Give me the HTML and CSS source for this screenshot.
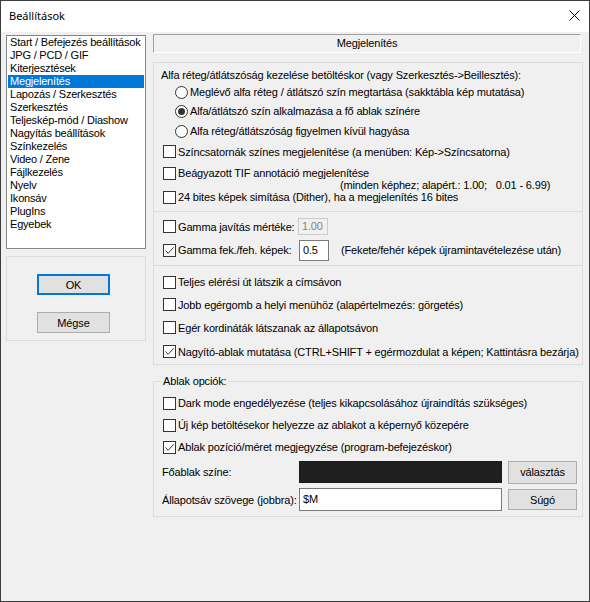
FILE: index.html
```html
<!DOCTYPE html>
<html lang="hu">
<head>
<meta charset="utf-8">
<title>Beállítások</title>
<link rel="stylesheet" href="styles.css">
</head>
<body>
<div class="window">
  <div class="titlebar">
    <span class="title">Beállítások</span>
    <svg class="close" viewBox="0 0 11 11" width="11" height="11"><path d="M0.5 0.5 L10.5 10.5 M10.5 0.5 L0.5 10.5" stroke="#000" stroke-width="1" fill="none"/></svg>
  </div>
  <div class="client">
    <div class="left">
      <ul class="list">
        <li>Start / Befejezés beállítások</li>
        <li>JPG / PCD / GIF</li>
        <li>Kiterjesztések</li>
        <li class="sel">Megjelenítés</li>
        <li>Lapozás / Szerkesztés</li>
        <li>Szerkesztés</li>
        <li>Teljeskép-mód / Diashow</li>
        <li>Nagyítás beállítások</li>
        <li>Színkezelés</li>
        <li>Video / Zene</li>
        <li>Fájlkezelés</li>
        <li>Nyelv</li>
        <li>Ikonsáv</li>
        <li>PlugIns</li>
        <li>Egyebek</li>
      </ul>
      <div class="btnbox">
        <button class="btn ok">OK</button>
        <button class="btn">Mégse</button>
      </div>
    </div>
    <div class="right">
      <div class="header">Megjelenítés</div>
      <div class="group g1">
        <div class="row caption">Alfa réteg/átlátszóság kezelése betöltéskor (vagy Szerkesztés-&gt;Beillesztés):</div>
        <div class="row radio-row r1"><span class="radio"></span>Meglévő alfa réteg / átlátszó szín megtartása (sakktábla kép mutatása)</div>
        <div class="row radio-row r2"><span class="radio on"></span>Alfa/átlátszó szín alkalmazása a fő ablak színére</div>
        <div class="row radio-row r3"><span class="radio"></span>Alfa réteg/átlátszóság figyelmen kívül hagyása</div>
        <div class="row check-row c1"><span class="cb"></span>Színcsatornák színes megjelenítése (a menüben: Kép-&gt;Színcsatorna)</div>
        <div class="row check-row c2"><span class="cb"></span>Beágyazott TIF annotáció megjelenítése</div>
        <div class="row check-row c3"><span class="cb"></span>24 bites képek simítása (Dither), ha a megjelenítés 16 bites<span class="note">(minden képhez; alapért.: 1.00;&nbsp;&nbsp;&nbsp;0.01 - 6.99)</span></div>
        <div class="sep s1"></div>
        <div class="row check-row gam1"><span class="cb"></span><span class="glabel">Gamma javítás mértéke:</span><span class="num dis">1.00</span></div>
        <div class="row check-row gam2"><span class="cb on"><svg viewBox="0 0 11 11" width="11" height="11"><path d="M1.5 5.5 L4.2 8.3 L9.6 2.4" stroke="#333" stroke-width="1" fill="none"/></svg></span><span class="glabel g2l">Gamma fek./feh. képek:</span><span class="num">0.5</span><span class="gnote">(Fekete/fehér képek újramintavételezése után)</span></div>
        <div class="sep s2"></div>
        <div class="row check-row t1"><span class="cb"></span>Teljes elérési út látszik a címsávon</div>
        <div class="row check-row t2"><span class="cb"></span>Jobb egérgomb a helyi menühöz (alapértelmezés: görgetés)</div>
        <div class="row check-row t3"><span class="cb"></span>Egér kordináták látszanak az állapotsávon</div>
        <div class="row check-row t4"><span class="cb on"><svg viewBox="0 0 11 11" width="11" height="11"><path d="M1.5 5.5 L4.2 8.3 L9.6 2.4" stroke="#333" stroke-width="1" fill="none"/></svg></span>Nagyító-ablak mutatása (CTRL+SHIFT + egérmozdulat a képen; Kattintásra bezárja)</div>
      </div>
      <div class="group g2">
        <span class="legend">Ablak opciók:</span>
        <div class="row check-row w1"><span class="cb"></span>Dark mode engedélyezése (teljes kikapcsolásához újraindítás szükséges)</div>
        <div class="row check-row w2"><span class="cb"></span>Új kép betöltésekor helyezze az ablakot a képernyő közepére</div>
        <div class="row check-row w3"><span class="cb on"><svg viewBox="0 0 11 11" width="11" height="11"><path d="M1.5 5.5 L4.2 8.3 L9.6 2.4" stroke="#333" stroke-width="1" fill="none"/></svg></span>Ablak pozíció/méret megjegyzése (program-befejezéskor)</div>
        <div class="row field-row f1"><span class="flabel">Főablak színe:</span><span class="swatch"></span><button class="btn small">választás</button></div>
        <div class="row field-row f2"><span class="flabel">Állapotsáv szövege (jobbra):</span><span class="text-input">$M</span><button class="btn small sugo">Súgó</button></div>
      </div>
    </div>
  </div>
</div>
</body>
</html>
```

FILE: styles.css
```css
* { box-sizing: border-box; }
body {
  margin: 0;
  font-family: "Liberation Sans", Arial, sans-serif;
  font-size: 11px;
  letter-spacing: -0.15px;
  color: #000;
  background: #f0f0f0;
}
.window {
  width: 590px;
  height: 602px;
  border: 1px solid #3d3d3d;
  background: #f0f0f0;
  display: flex;
  flex-direction: column;
}
.titlebar {
  height: 31px;
  flex: none;
  background: #fff;
  display: flex;
  align-items: center;
  justify-content: space-between;
  padding: 0 9px 2px 8px;
}
.title {
  font-family: "Noto Sans", "Open Sans", sans-serif;
  font-size: 11px;
  letter-spacing: 0;
}
.close { display: block; }
.client {
  display: flex;
  gap: 7px;
  padding: 2px 5px 0 5px;
  flex: 1;
}
.left { width: 140px; flex: none; padding-top: 1px; }
.list {
  list-style: none;
  margin: 0;
  padding: 0;
  height: 214px;
  border: 1px solid #828790;
  background: #fff;
  letter-spacing: -0.2px;
}
.list li {
  height: 13px;
  line-height: 13px;
  padding-left: 2px;
  margin: 0 1px;
  white-space: nowrap;
}
.list li.sel { background: #0078d7; color: #fff; }
.btnbox {
  margin-top: 7px;
  height: 85px;
  border: 1px solid #dcdcdc;
  padding: 17px 0 0 30px;
  display: flex;
  flex-direction: column;
  align-items: flex-start;
  gap: 17px;
}
.btn {
  width: 73px;
  height: 21px;
  background: #e1e1e1;
  border: 1px solid #adadad;
  font-family: inherit;
  font-size: 11px;
  letter-spacing: inherit;
  color: #000;
  padding: 0;
  margin: 0;
}
.btn.ok { border: 2px solid #0078d7; }

.right { width: 430px; flex: none; }
.header {
  width: 428px;
  height: 19px;
  border-top: 1px solid #a0a0a0;
  border-left: 1px solid #a0a0a0;
  border-right: 1px solid #fff;
  border-bottom: 1px solid #fff;
  text-align: center;
  line-height: 17px;
}
.group { border: 1px solid #dcdcdc; position: relative; }
.g1 { margin-top: 9px; }
.row { display: flex; align-items: center; white-space: nowrap; }
.caption { margin-top: 4px; height: 16px; padding-left: 7px; }
.radio-row { padding-left: 21px; }
.r1 { height: 18px; }
.r2 { height: 20px; }
.r3 { height: 20px; }
.check-row { padding-left: 9px; }
.c1 { height: 21px; }
.c2 { height: 22px; }
.c3 { height: 20px; margin-top: 3px; position: relative; }
.note {
  position: absolute;
  left: 186px;
  top: -8px;
  height: 14px;
  line-height: 13px;
  padding-right: 4px;
  background: #f0f0f0;
}
.sep { border-top: 1px solid #dcdcdc; }
.s1 { margin-top: 4px; }
.s2 { margin-top: 4px; }
.gam1 { height: 21px; margin-top: 4px; }
.gam2 { height: 22px; margin-top: 2px; }
.glabel { width: 120px; }
.g2l { width: 121px; }
.num {
  width: 30px;
  height: 21px;
  border: 1px solid #7a7a7a;
  background: #fff;
  padding-left: 3px;
  line-height: 19px;
}
.num.dis {
  height: 17px;
  line-height: 15px;
  border-color: #cccccc;
  background: #f0f0f0;
  color: #838383;
}
.gnote { margin-left: 12px; }
.t1 { height: 22px; margin-top: 5px; }
.t2 { height: 23px; }
.t3 { height: 23px; }
.t4 { height: 25px; }

.cb {
  width: 13px;
  height: 13px;
  flex: none;
  border: 1px solid #333;
  background: #fff;
  margin-right: 2px;
  display: flex;
  align-items: center;
  justify-content: center;
}
.cb svg { display: block; }
.radio {
  width: 13px;
  height: 13px;
  flex: none;
  border: 1px solid #333;
  border-radius: 50%;
  background: #fff;
  margin-right: 2px;
  display: flex;
  align-items: center;
  justify-content: center;
}
.radio.on::after {
  content: "";
  width: 7px;
  height: 7px;
  border-radius: 50%;
  background: #333;
}

.g2 { margin-top: 16px; padding-bottom: 4px; }
.legend {
  position: absolute;
  top: -7px;
  left: 7px;
  padding: 0 2px;
  line-height: 13px;
  background: #f0f0f0;
}
.w1 { height: 22px; margin-top: 10px; }
.w2 { height: 22px; }
.w3 { height: 22px; }
.field-row { padding-left: 8px; }
.f1 { height: 24px; margin-top: 2px; }
.f2 { height: 25px; margin-top: 3px; }
.flabel { width: 137px; flex: none; }
.swatch {
  width: 203px;
  height: 22px;
  background: #1f1f1f;
  border: 1px solid #1a1a1a;
}
.text-input {
  width: 203px;
  height: 23px;
  border: 1px solid #7a7a7a;
  background: #fff;
  padding-left: 3px;
  line-height: 21px;
}
.btn.small { width: 69px; height: 23px; margin-left: 6px; }
.btn.sugo { height: 21px; }
```
